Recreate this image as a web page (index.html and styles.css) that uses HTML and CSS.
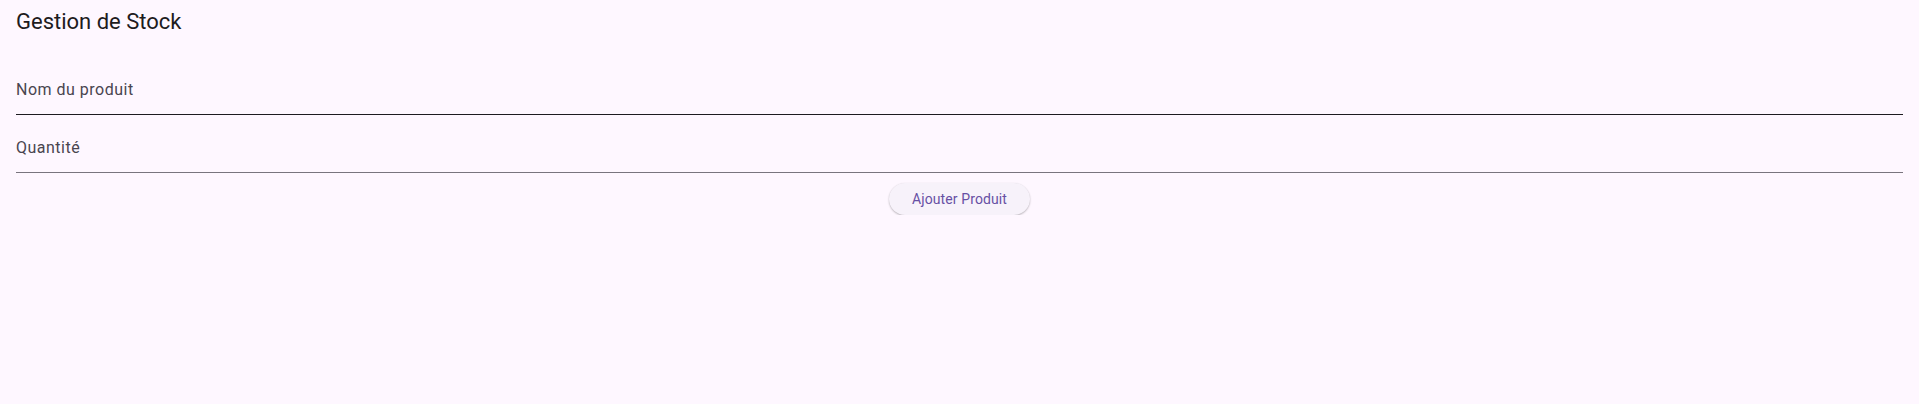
FILE: index.html
```html
<!DOCTYPE html>
<html lang="fr">
<head>
<meta charset="utf-8">
<title>Gestion de Stock</title>
<link rel="stylesheet" href="styles.css">
</head>
<body>
<header class="app-bar">
  <h1 class="app-title">Gestion de Stock</h1>
</header>
<main class="content">
  <label class="field field-active">
    <span class="field-label">Nom du produit</span>
  </label>
  <label class="field">
    <span class="field-label">Quantité</span>
  </label>
  <div class="actions">
    <button class="btn-elevated" type="button">Ajouter Produit</button>
  </div>
</main>
</body>
</html>
```
FILE: styles.css
```css
html, body {
  margin: 0;
  padding: 0;
  background: #fef7ff;
  font-family: Roboto, "Noto Sans", "Liberation Sans", sans-serif;
  color: #1d1b20;
}

.app-bar {
  height: 57px;
  padding: 8px 16px 0;
  box-sizing: border-box;
}

.app-title {
  margin: 0;
  font-size: 22px;
  line-height: 28px;
  font-weight: 400;
  color: #1d1b20;
}

.content {
  padding: 0 16px;
  display: flex;
  flex-direction: column;
}

.field {
  display: block;
  padding: 21px 0 12px;
  border-bottom: 1px solid #79747e;
}

.field-active {
  border-bottom-color: #1d1b20;
}

.field-label {
  display: block;
  font-size: 16px;
  line-height: 24px;
  letter-spacing: 0.5px;
  color: #49454f;
}

.actions {
  display: flex;
  justify-content: center;
  margin-top: 10px;
}

.btn-elevated {
  height: 32px;
  padding: 0 23px;
  border: none;
  border-radius: 16px;
  background: #f7f2fa;
  color: #6750a4;
  font-family: Roboto, "Noto Sans", "Liberation Sans", sans-serif;
  font-size: 14px;
  font-weight: 400;
  letter-spacing: 0.1px;
  box-shadow: 0 1px 2px rgba(0, 0, 0, 0.25), 0 0 1px rgba(0, 0, 0, 0.08);
  cursor: pointer;
}
```
